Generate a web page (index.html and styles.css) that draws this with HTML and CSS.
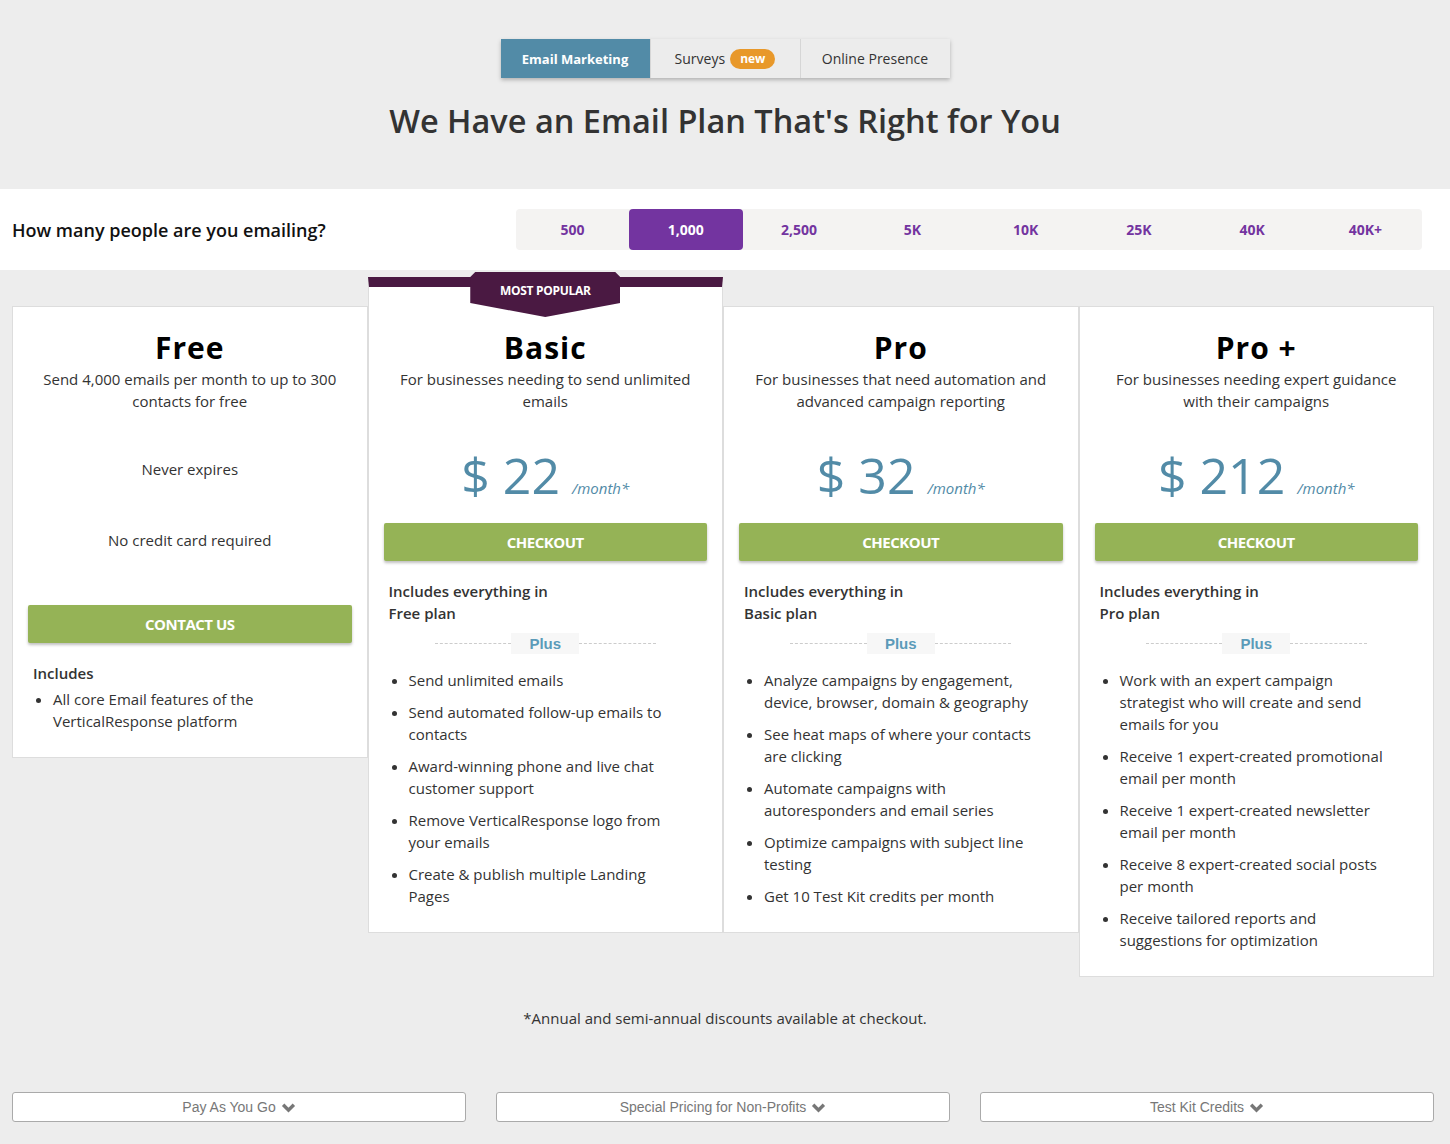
FILE: index.html
```html
<!DOCTYPE html>
<html lang="en">
<head>
    <meta charset="UTF-8">
    <meta name="viewport" content="width=device-width, initial-scale=1.0">
    <title>Email Marketing Pricing</title>
    <link rel="stylesheet" href="styles.css">
</head>
<body>
    <div class="top">
        <div class="tabs">
            <a class="tab active">Email Marketing</a>
            <a class="tab">Surveys <span class="new">new</span></a>
            <a class="tab">Online Presence</a>
        </div>
        <h1>We Have an Email Plan That's Right for You</h1>
    </div>

    <div class="band">
        <h2>How many people are you emailing?</h2>
        <div class="slider">
            <span class="step">500</span>
            <span class="step active">1,000</span>
            <span class="step">2,500</span>
            <span class="step">5K</span>
            <span class="step">10K</span>
            <span class="step">25K</span>
            <span class="step">40K</span>
            <span class="step">40K+</span>
        </div>
    </div>

    <div class="plans">
        <div class="plan">
            <h3>Free</h3>
            <p class="desc">Send 4,000 emails per month to up to 300<br>contacts for free</p>
            <p class="perk perk-first">Never expires</p>
            <p class="perk">No credit card required</p>
            <a class="btn btn-contact">Contact Us</a>
            <p class="includes">Includes</p>
            <ul class="features features-tight">
                <li>All core Email features of the<br>VerticalResponse platform</li>
            </ul>
        </div>

        <div class="plan popular">
            <div class="badge">Most Popular</div>
            <h3>Basic</h3>
            <p class="desc">For businesses needing to send unlimited<br>emails</p>
            <div class="price"><span class="amount">$ 22</span><span class="per">/month*</span></div>
            <a class="btn">Checkout</a>
            <p class="includes">Includes everything in<br>Free plan</p>
            <div class="plus"><span>Plus</span></div>
            <ul class="features">
                <li>Send unlimited emails</li>
                <li>Send automated follow-up emails to<br>contacts</li>
                <li>Award-winning phone and live chat<br>customer support</li>
                <li>Remove VerticalResponse logo from<br>your emails</li>
                <li>Create &amp; publish multiple Landing<br>Pages</li>
            </ul>
        </div>

        <div class="plan">
            <h3>Pro</h3>
            <p class="desc">For businesses that need automation and<br>advanced campaign reporting</p>
            <div class="price"><span class="amount">$ 32</span><span class="per">/month*</span></div>
            <a class="btn">Checkout</a>
            <p class="includes">Includes everything in<br>Basic plan</p>
            <div class="plus"><span>Plus</span></div>
            <ul class="features">
                <li>Analyze campaigns by engagement,<br>device, browser, domain &amp; geography</li>
                <li>See heat maps of where your contacts<br>are clicking</li>
                <li>Automate campaigns with<br>autoresponders and email series</li>
                <li>Optimize campaigns with subject line<br>testing</li>
                <li>Get 10 Test Kit credits per month</li>
            </ul>
        </div>

        <div class="plan">
            <h3>Pro +</h3>
            <p class="desc">For businesses needing expert guidance<br>with their campaigns</p>
            <div class="price"><span class="amount">$ 212</span><span class="per">/month*</span></div>
            <a class="btn">Checkout</a>
            <p class="includes">Includes everything in<br>Pro plan</p>
            <div class="plus"><span>Plus</span></div>
            <ul class="features">
                <li>Work with an expert campaign<br>strategist who will create and send<br>emails for you</li>
                <li>Receive 1 expert-created promotional<br>email per month</li>
                <li>Receive 1 expert-created newsletter<br>email per month</li>
                <li>Receive 8 expert-created social posts<br>per month</li>
                <li>Receive tailored reports and<br>suggestions for optimization</li>
            </ul>
        </div>
    </div>

    <p class="note">*Annual and semi-annual discounts available at checkout.</p>

    <div class="more">
        <a class="more-btn">Pay As You Go <svg class="chev" viewBox="0 0 14 10"><path d="M2 2.5 L7 7.5 L12 2.5"/></svg></a>
        <a class="more-btn">Special Pricing for Non-Profits <svg class="chev" viewBox="0 0 14 10"><path d="M2 2.5 L7 7.5 L12 2.5"/></svg></a>
        <a class="more-btn">Test Kit Credits <svg class="chev" viewBox="0 0 14 10"><path d="M2 2.5 L7 7.5 L12 2.5"/></svg></a>
    </div>
</body>
</html>
```

FILE: styles.css
```css
body {
    font-family: 'Open Sans', sans-serif;
    margin: 0;
    padding: 0 0 22px;
    background: #ededed;
    color: #333333;
    font-size: 15px;
}

p {
    margin: 0;
}

a {
    cursor: pointer;
}

.top {
    padding: 39px 0 48px;
    text-align: center;
}

.tabs {
    display: inline-flex;
    box-shadow: 0px 2px 4px rgba(0, 0, 0, 0.25);
}

.tab {
    width: 149px;
    height: 39px;
    display: flex;
    align-items: center;
    justify-content: center;
    background: #ececec;
    color: #333333;
    font-size: 14px;
    border-left: 1px solid #d6d6d6;
}

.tab:first-child {
    border-left: none;
}

.tab.active {
    background: #528ba7;
    color: #ffffff;
    font-size: 13px;
    font-weight: bold;
}

.new {
    display: inline-block;
    margin-left: 5px;
    padding: 1px 10px 2px;
    background: #e8982a;
    color: #ffffff;
    font-size: 12px;
    font-weight: bold;
    border-radius: 10px;
}

h1 {
    margin: 23px 0 0;
    font-size: 32.5px;
    line-height: 40px;
    font-weight: 600;
    color: #333333;
}

.band {
    height: 81px;
    background: #ffffff;
    display: flex;
    align-items: center;
    justify-content: space-between;
    padding: 0 28px 0 12px;
}

.band h2 {
    margin: 0;
    font-size: 18px;
    font-weight: 600;
    color: #111111;
}

.slider {
    width: 906px;
    height: 41px;
    display: flex;
    background: #f4f3f2;
    border-radius: 4px;
}

.step {
    flex: 1;
    display: flex;
    align-items: center;
    justify-content: center;
    color: #7334a0;
    font-size: 14px;
    font-weight: bold;
    border-radius: 4px;
}

.step.active {
    background: #7334a0;
    color: #ffffff;
}

.plans {
    display: flex;
    align-items: flex-start;
    margin: 7px 16px 0 12px;
}

.plan {
    flex: 1;
    position: relative;
    margin-top: 29px;
    padding: 23px 15px 25px;
    background: #ffffff;
    border: 1px solid #dddddd;
}

.plan.popular {
    margin-top: 0;
    padding-top: 43px;
    border-top: 10px solid #4a1942;
}

.badge {
    position: absolute;
    top: -15px;
    left: 50%;
    margin-left: -75px;
    width: 150px;
    height: 45px;
    padding-top: 10px;
    box-sizing: border-box;
    background: #4a1942;
    color: #ffffff;
    font-size: 12px;
    font-weight: bold;
    text-transform: uppercase;
    letter-spacing: -0.3px;
    text-align: center;
    clip-path: polygon(5px 0, 145px 0, 150px 5px, 150px 31px, 75px 45px, 0 31px, 0 5px);
}

h3 {
    margin: 0;
    font-size: 30px;
    line-height: 36px;
    font-weight: bold;
    letter-spacing: 1px;
    color: #000000;
    text-align: center;
}

.desc {
    margin-top: 2px;
    line-height: 22px;
    text-align: center;
}

.perk {
    margin-top: 49px;
    line-height: 22px;
    text-align: center;
}

.perk-first {
    margin-top: 46px;
}

.price {
    margin-top: 33px;
    height: 60px;
    text-align: center;
    color: #528ba7;
    white-space: nowrap;
}

.amount {
    font-size: 50px;
    line-height: 60px;
}

.per {
    margin-left: 12px;
    font-size: 15px;
    font-style: italic;
}

.btn {
    display: flex;
    align-items: center;
    justify-content: center;
    height: 38px;
    margin-top: 18px;
    background: #95b356;
    color: #ffffff;
    font-size: 15px;
    font-weight: bold;
    text-transform: uppercase;
    letter-spacing: -0.5px;
    border-radius: 2px;
    box-shadow: 0px 2px 3px rgba(0, 0, 0, 0.25);
}

.btn-contact {
    margin-top: 54px;
}

.includes {
    margin-top: 19px;
    padding: 0 5px;
    line-height: 22px;
    font-weight: 600;
}

.plus {
    display: flex;
    align-items: center;
    width: 221px;
    margin: 9px auto 0;
}

.plus::before,
.plus::after {
    content: "";
    flex: 1;
    border-top: 1px dashed #cccccc;
}

.plus span {
    width: 68px;
    height: 21px;
    line-height: 21px;
    text-align: center;
    background: #f7f7f7;
    color: #5b9bb9;
    font-family: 'Liberation Sans', Arial, sans-serif;
    font-weight: bold;
    font-size: 15px;
}

.features {
    margin: 15px 0 0;
    padding: 0 0 0 25px;
    line-height: 22px;
}

.features li {
    margin-top: 10px;
    white-space: nowrap;
}

.features li:first-child {
    margin-top: 0;
}

.features-tight {
    margin-top: 4px;
}

.note {
    margin-top: 30px;
    line-height: 22px;
    text-align: center;
}

.more {
    display: grid;
    grid-template-columns: repeat(3, 1fr);
    gap: 30px;
    margin: 63px 16px 0 12px;
}

.more-btn {
    display: flex;
    align-items: center;
    justify-content: center;
    height: 28px;
    background: #ffffff;
    border: 1px solid #aaaaaa;
    border-radius: 3px;
    color: #777777;
    font-family: 'Liberation Sans', Arial, sans-serif;
    font-size: 14px;
}

.chev {
    width: 15px;
    height: 11px;
    margin-left: 5px;
    fill: none;
    stroke: #777777;
    stroke-width: 3.2;
}
```
